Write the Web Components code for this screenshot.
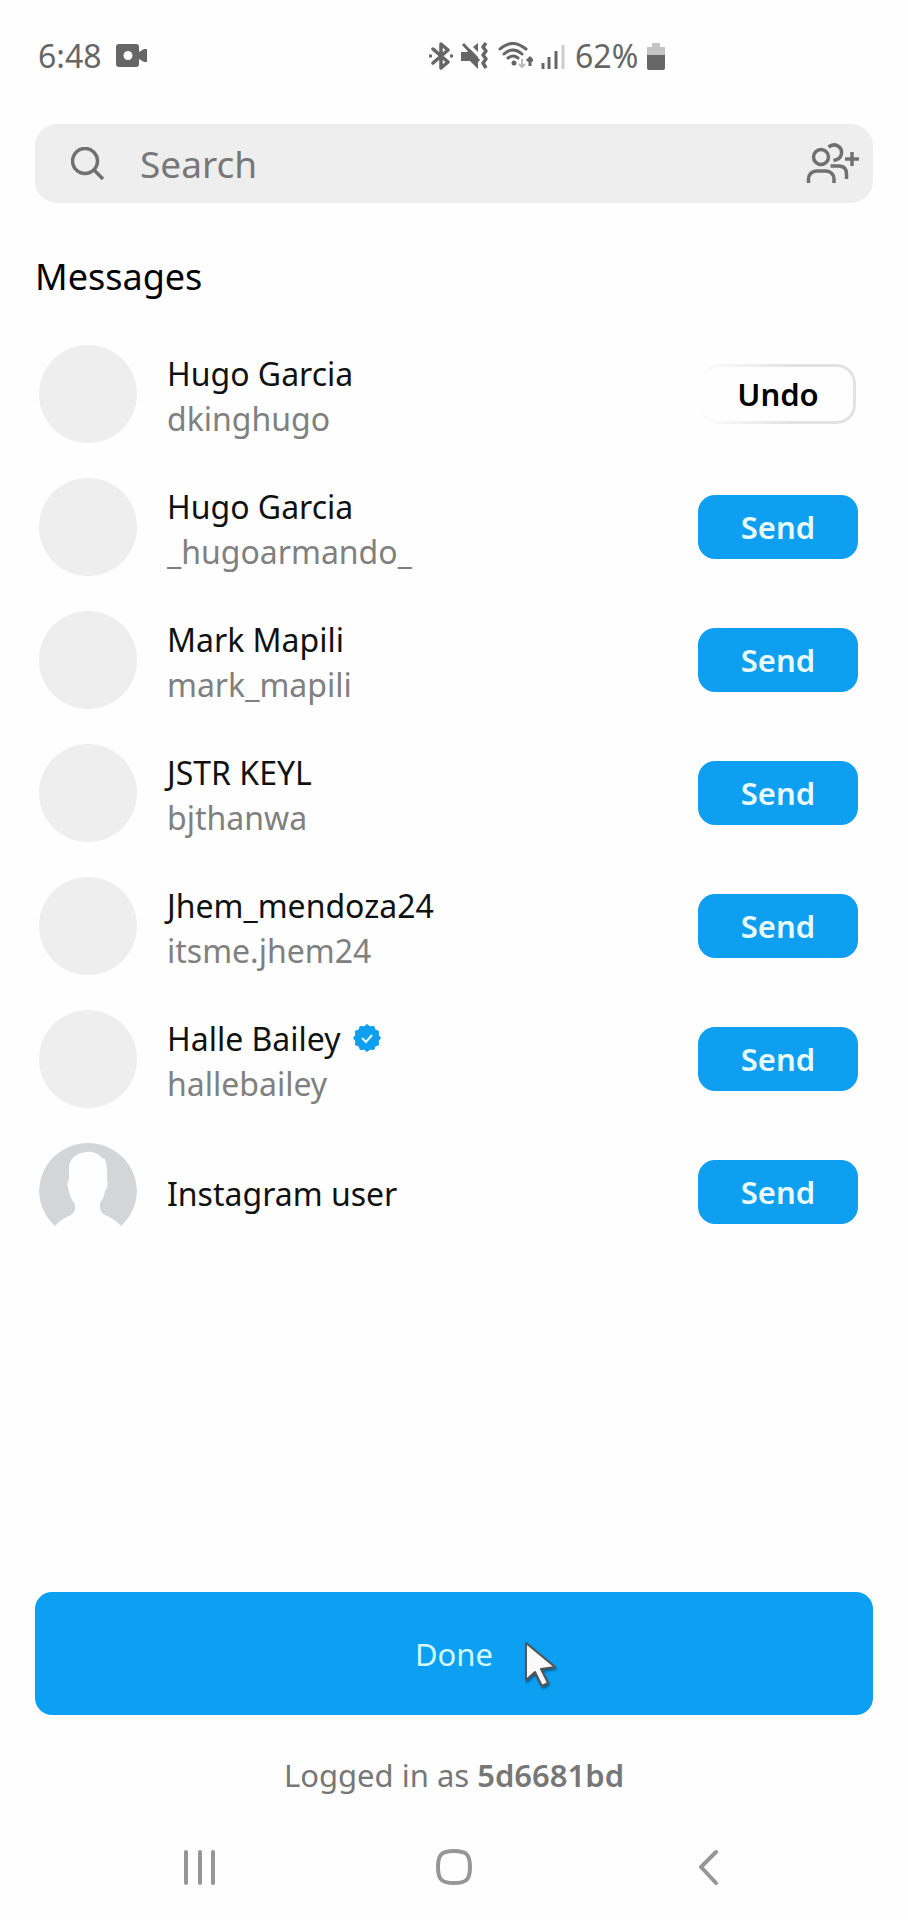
<!DOCTYPE html>
<html lang="en">
<head>
<meta charset="utf-8">
<meta name="viewport" content="width=device-width, initial-scale=1">
<title>Messages</title>
<style>
body { margin: 0; background: #fefefe; font-family: "Noto Sans", sans-serif; font-size: 31px; line-height: 45px; color: #111; }
</style>
</head>
<body>
<share-screen>
  <status-bar slot="top" time="6:48" battery="62%"></status-bar>
  <search-field label="Search"></search-field>
  <message-list heading="Messages">
    <contact-row handle="dkinghugo" sent>Hugo Garcia</contact-row>
    <contact-row handle="_hugoarmando_">Hugo Garcia</contact-row>
    <contact-row handle="mark_mapili">Mark Mapili</contact-row>
    <contact-row handle="bjthanwa">JSTR KEYL</contact-row>
    <contact-row handle="itsme.jhem24">Jhem_mendoza24</contact-row>
    <contact-row handle="hallebailey" verified>Halle Bailey</contact-row>
    <contact-row no-photo>Instagram user</contact-row>
  </message-list>
  <done-panel slot="bottom">Logged in as <b>5d6681bd</b></done-panel>
  <nav-bar slot="bottom"></nav-bar>
</share-screen>

<script>
const define = (name, render) => customElements.define(name, class extends HTMLElement {
  connectedCallback() {
    if (this.shadowRoot) return;
    this.attachShadow({ mode: "open" }).innerHTML = render(this);
  }
});

define("share-screen", () => `
  <style>
    :host { display: flex; flex-direction: column; min-height: 100vh; }
    main { flex: 1; padding: 0 35px; }
  </style>
  <slot name="top"></slot>
  <main><slot></slot></main>
  <slot name="bottom"></slot>`);

define("status-bar", el => `
  <style>
    :host { display: flex; align-items: center; padding: 33px 38px 46px; color: #666; font-size: 32px; }
    div { display: flex; align-items: center; gap: 8px; }
    .clock { flex: 0 0 47%; gap: 14px; }
    svg { display: block; fill: none; stroke: #666; flex: none; }
  </style>
  <div class="clock"><span>${el.getAttribute("time")}</span>
    <svg width="32" height="28" viewBox="0 0 32 28" stroke="none"><path fill="#666" stroke="none" fill-rule="evenodd" d="M3 2h17q3 0 3 3v5l5-3h3v13h-3l-5-3v5q0 3-3 3H3q-3 0-3-3V5q0-3 3-3zM12 9a4.500 4.500 0 1 0 .01 0z"/></svg>
  </div>
  <div>
    <svg width="24" height="28" viewBox="0 0 24 28"><path stroke-width="3.500" stroke-linejoin="round" stroke-linecap="round" d="M4 7l15 13-7 6V2l7 6L4 21"/><path stroke-width="3" d="M0 14h3M21 14h3"/></svg>
    <svg width="28" height="28" viewBox="0 0 28 28"><path fill="#666" stroke="none" d="M0 10h6l3-3 8 8v12l-8-8H0zM12 5l5-4v9z"/><path stroke-width="3" d="M2 2l16 17"/><path stroke-width="3.500" stroke-linejoin="round" d="M25 1l-3 4 3 4-3 4 3 4-3 4 3 5"/></svg>
    <svg width="36" height="28" viewBox="0 0 36 28"><path stroke-width="3" stroke-linecap="round" d="M3 7q12-11 26 0M7 12q9-8 18 0M11 16q5-4 10 0"/><circle cx="17" cy="21" r="2.500" fill="#666" stroke="none"/><path stroke="#bbb" stroke-width="2" d="M25 17v8M22 22l3 3 3-3"/><path stroke-width="3" d="M33 24v-7M30 19l3-3 3 3"/></svg>
    <svg width="26" height="28" viewBox="0 0 26 28"><path stroke-width="3" d="M2 27v-6M8 27V15M15 27V9"/><path stroke="#ccc" stroke-width="3" d="M22 27V3"/></svg>
    <span>${el.getAttribute("battery")}</span>
    <svg width="22" height="28" viewBox="0 0 22 28" stroke="none"><path fill="#c4c4c4" stroke="none" d="M1 5h5V1h8v4h5v8H1z"/><path fill="#666" stroke="none" d="M1 13h18v13q0 2-2 2H3q-2 0-2-2z"/></svg>
  </div>`);

define("search-field", el => `
  <style>
    :host { display: block; }
    label { display: flex; align-items: center; height: 79px; padding: 0 13px 0 36px; background: #eee; border-radius: 22px; }
    input { flex: 1; min-width: 0; margin: 0 0 0 35px; padding: 0; border: 0; outline: 0; background: none; font: 37px/50px "Noto Sans", sans-serif; color: #111; }
    input::placeholder { color: #777; opacity: 1; }
    button { border: 0; padding: 0; background: none; }
    svg { display: block; fill: none; stroke: #707070; flex: none; }
  </style>
  <label>
    <svg width="34" height="34" viewBox="0 0 34 34" stroke-width="3.500"><circle cx="14" cy="14" r="12.500"/><path d="M23 23l9 9"/></svg>
    <input type="text" placeholder="${el.getAttribute("label")}" aria-label="${el.getAttribute("label")}">
    <button type="button" aria-label="Create group"><svg width="54" height="42" viewBox="0 0 54 42" stroke-width="3.500"><circle cx="15" cy="14" r="7.500"/><path d="M2.500 40v-4a8 8 0 0 1 8-8h9.500a8 8 0 0 1 8 8v4M22.500 4C29-1 36 4 35.500 10q0 6-8 7.500M24.500 23h8q8 0 8 8v5M46 9v14M39 16h14"/></svg></button>
  </label>`);

define("message-list", el => `
  <style>
    :host { display: block; }
    h2 { margin: 49px 0 25px; font-weight: 400; font-size: 36px; line-height: 50px; color: #000; }
  </style>
  <h2>${el.getAttribute("heading")}</h2>
  <slot></slot>`);

/* Scalloped badge outline with twelve lobes. */
const badge = Array.from({ length: 24 }, (_, i) => {
  const r = i % 2 ? 11.5 : 13.5, a = i * Math.PI / 12;
  return (14 + r * Math.sin(a)).toFixed(1) + "," + (14 - r * Math.cos(a)).toFixed(1);
}).join(" ");

define("contact-row", el => {
  const handle = el.getAttribute("handle");
  return `
  <style>
    :host { display: flex; align-items: center; height: 133px; padding: 0 15px 0 4px; font-size: 32px; }
    .photo { flex: none; width: 98px; height: 98px; border-radius: 50%; background: #eee; overflow: hidden; }
    :host([no-photo]) .photo { background: none; }
    .who { flex: 1; min-width: 0; margin-left: 30px; padding-top: 4px; }
    .name { display: flex; align-items: center; gap: 12px; }
    .handle { color: #808080; }
    svg { display: block; }
  </style>
  <div class="photo">${el.hasAttribute("no-photo") ? `<svg width="98" height="98" viewBox="0 0 98 98"><path fill="#d3d6d8" d="M16 83A49 49 0 1 1 82 83Q76 76 66 72 61 69 61 65V60Q65 55 66 48 70 43 68 36 69 25 66 16 63 16 61 13 55 8 47 9 34 10 30 22V36Q27 41 30 48 31 55 36 61V66Q36 69 32 72 22 76 16 83z"/></svg>` : ""}</div>
  <div class="who">
    <div class="name"><slot></slot>${el.hasAttribute("verified") ? `<svg width="28" height="28" viewBox="0 0 28 28" role="img" aria-label="Verified"><polygon points="${badge}" fill="#0f9ff0" stroke="#0f9ff0" stroke-linejoin="round"/><path d="M9 14l4 4 6-7" fill="none" stroke="#e8faff" stroke-width="2"/></svg>` : ""}</div>
    ${handle ? `<div class="handle">${handle}</div>` : ""}
  </div>
  <send-button ${el.hasAttribute("sent") ? "undo" : ""}>${el.hasAttribute("sent") ? "Undo" : "Send"}</send-button>`;
});

define("send-button", () => `
  <style>
    :host { display: block; flex: none; }
    button { position: relative; display: block; width: 160px; height: 64px; padding: 2px 0 0; border: 0; border-radius: 17px; background: #0f9ff0; color: #e8fbff; font: 600 31px/45px "Noto Sans", sans-serif; }
    :host([undo]) button { background: none; color: #000; }
    :host([undo]) button::before { content: ""; position: absolute; inset: 2px; border: 3px solid #e2e2e2; border-radius: 19px; -webkit-mask: linear-gradient(90deg, transparent, #000 60%); mask: linear-gradient(90deg, transparent, #000 60%); }
  </style>
  <button type="button"><slot></slot></button>`);

define("done-panel", () => `
  <style>
    :host { display: block; padding: 0 35px; color: #777; }
    button { position: relative; display: block; width: 100%; height: 123px; padding: 2px 0 0; border: 0; border-radius: 17px; background: #0c9ff2; color: #d2fbff; font: 31px/45px "Noto Sans", sans-serif; }
    svg { position: absolute; left: 50%; top: 50%; margin: -13px 0 0 69px; overflow: visible; filter: drop-shadow(1px 2px 1px #0006); }
    p { margin: 38px 0 0; text-align: center; }
    ::slotted(b) { font-weight: 600; }
  </style>
  <button type="button">Done<svg width="36" height="46" viewBox="0 0 36 46"><path fill="#fafafa" stroke="#555" stroke-width="2" stroke-linejoin="round" d="M3 2v37l9-8 7 14 6-3-7-14 14-2z"/></svg></button>
  <p><slot></slot></p>`);

define("nav-bar", () => `
  <style>
    :host { display: block; }
    nav { display: grid; grid-template-columns: repeat(3, 1fr); justify-items: center; padding: 51px 8% 35px; }
    button { padding: 0; border: 0; background: none; }
    svg { display: block; fill: none; stroke: #969696; stroke-width: 4; stroke-linecap: round; stroke-linejoin: round; }
  </style>
  <nav>
    <button type="button" aria-label="Recent apps"><svg width="36" height="36" viewBox="0 0 36 36"><path d="M4 3v31M18 3v31M31 3v31"/></svg></button>
    <button type="button" aria-label="Home"><svg width="36" height="36" viewBox="0 0 36 36"><path d="M18 2C30 2 34 5 34 18S30 34 18 34 2 31 2 18 6 2 18 2z"/></svg></button>
    <button type="button" aria-label="Back"><svg width="36" height="36" viewBox="0 0 36 36"><path d="M26 3L11 18l15 16"/></svg></button>
  </nav>`);
</script>
</body>
</html>
